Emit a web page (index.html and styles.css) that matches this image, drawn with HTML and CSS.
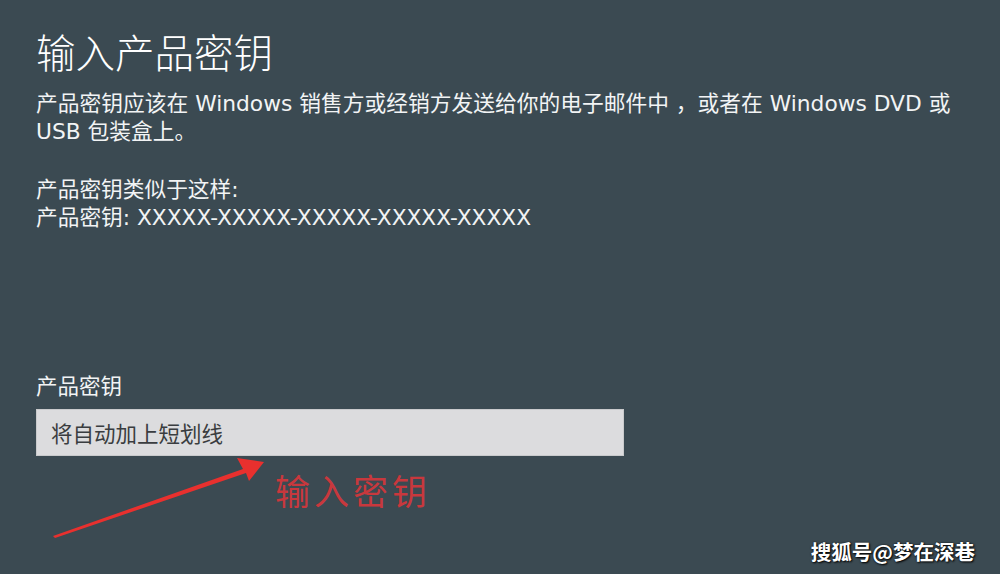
FILE: index.html
```html
<!DOCTYPE html>
<html lang="zh-CN">
<head>
<meta charset="utf-8">
<title>输入产品密钥</title>
<link rel="stylesheet" href="styles.css">
</head>
<body>
<main class="page">
  <h1 class="title">输入产品密钥</h1>
  <p class="desc">产品密钥应该在 Windows 销售方或经销方发送给你的电子邮件中 ，或者在 Windows DVD 或<br>USB 包装盒上。</p>
  <p class="desc example">产品密钥类似于这样:<br>产品密钥: XXXXX-XXXXX-XXXXX-XXXXX-XXXXX</p>
  <label class="field-label" for="key">产品密钥</label>
  <input class="key-input" id="key" type="text" placeholder="将自动加上短划线">
</main>
<div class="annotation">
  <svg class="arrow" width="300" height="120" viewBox="0 0 300 120">
    <polygon points="18,116 208,49 202,38 229,42 214,61 211,53 20,118" fill="#e8302e"/>
  </svg>
  <span class="annotation-text">输入密钥</span>
</div>
<div class="watermark">搜狐号@梦在深巷</div>
</body>
</html>
```

FILE: styles.css
```css
html, body {
  margin: 0;
  padding: 0;
}
body {
  width: 1000px;
  height: 574px;
  overflow: hidden;
  background: #3b4a52;
  color: #f2f4f5;
  font-family: "DejaVu Sans", "Noto Sans CJK SC", sans-serif;
  position: relative;
}
.page {
  padding: 27px 0 0 36px;
  display: flex;
  flex-direction: column;
  align-items: flex-start;
}
.title {
  margin: 0;
  font-family: "Noto Sans CJK SC", sans-serif;
  font-weight: 300;
  font-size: 39.5px;
  line-height: 48px;
  color: #ffffff;
}
.desc {
  margin: 15px 0 0;
  font-size: 21.75px;
  line-height: 28px;
  white-space: nowrap;
}
.example {
  margin-top: 30px;
  font-size: 21.7px;
}
.field-label {
  margin-top: 141px;
  font-size: 21.5px;
  line-height: 28px;
}
.key-input {
  margin-top: 8px;
  width: 588px;
  height: 47px;
  box-sizing: border-box;
  border: 1px solid #c9cacc;
  background: #dcdcde;
  padding: 0 14px;
  font-family: "Noto Sans CJK SC", sans-serif;
  font-size: 21.5px;
  color: #333;
  outline: none;
}
.key-input::placeholder {
  color: #3a3d40;
  opacity: 1;
}
.annotation {
  position: absolute;
  left: 35px;
  top: 420px;
  width: 420px;
  height: 130px;
}
.arrow {
  position: absolute;
  left: 0;
  top: 0;
}
.annotation-text {
  position: absolute;
  left: 240px;
  top: 45px;
  font-family: "Noto Sans CJK SC", sans-serif;
  font-weight: 400;
  font-size: 35px;
  letter-spacing: 4px;
  line-height: 50px;
  color: #c8383d;
}
.watermark {
  position: absolute;
  right: 25px;
  bottom: 9px;
  font-family: "Noto Sans CJK SC", sans-serif;
  font-weight: 700;
  font-size: 20.5px;
  line-height: 28px;
  color: #ffffff;
  text-shadow: 1px 1px 2px #000, 0 0 2px rgba(0,0,0,0.7);
}
```
